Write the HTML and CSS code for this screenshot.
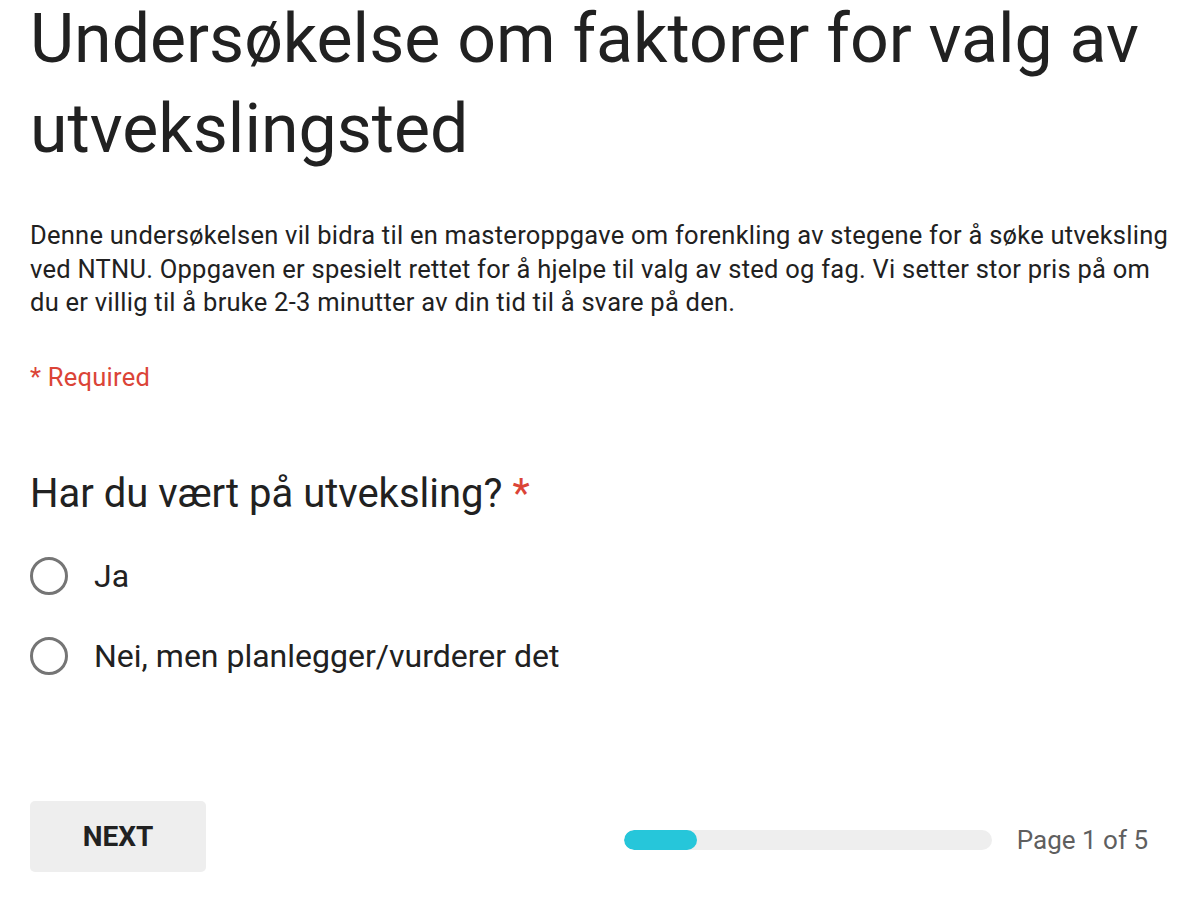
FILE: index.html
```html
<!DOCTYPE html>
<html lang="no">
<head>
<meta charset="utf-8">
<title>Undersøkelse om faktorer for valg av utvekslingsted</title>
<link rel="stylesheet" href="styles.css">
</head>
<body>
<main class="form">
  <h1 class="title">Undersøkelse om faktorer for valg av utvekslingsted</h1>
  <p class="desc">Denne undersøkelsen vil bidra til en masteroppgave om forenkling av stegene for å søke utveksling ved NTNU. Oppgaven er spesielt rettet for å hjelpe til valg av sted og fag. Vi setter stor pris på om du er villig til å bruke 2-3 minutter av din tid til å svare på den.</p>
  <p class="required">* Required</p>
  <section class="question">
    <h2 class="q-title">Har du vært på utveksling? <span class="star">*</span></h2>
    <div class="options">
      <label class="option"><span class="radio"></span><span class="opt-label">Ja</span></label>
      <label class="option"><span class="radio"></span><span class="opt-label">Nei, men planlegger/vurderer det</span></label>
    </div>
  </section>
  <footer class="nav">
    <button class="next" type="button">NEXT</button>
    <div class="progress">
      <div class="track"><div class="fill" style="width:20%"></div></div>
      <span class="page">Page 1 of 5</span>
    </div>
  </footer>
</main>
</body>
</html>
```
FILE: styles.css
```css
html, body {
  margin: 0;
  padding: 0;
  background: #ffffff;
}

body {
  font-family: Roboto, "Liberation Sans", Arial, sans-serif;
  color: #212121;
}

.form {
  width: 1140px;
  padding: 0 30px;
  display: flex;
  flex-direction: column;
}

.title {
  margin: -6px 0 0;
  font-size: 68px;
  line-height: 90px;
  font-weight: 400;
  color: #212121;
}

.desc {
  margin: 45px 0 0;
  font-size: 25.5px;
  line-height: 33.5px;
  letter-spacing: 0.25px;
  color: #212121;
}

.required {
  margin: 41px 0 0;
  font-size: 25.5px;
  line-height: 33.5px;
  letter-spacing: 0.25px;
  color: #db4437;
}

.question {
  margin-top: 74px;
  display: flex;
  flex-direction: column;
}

.q-title {
  margin: 0;
  font-size: 40px;
  line-height: 52px;
  font-weight: 400;
  color: #212121;
}

.star {
  color: #db4437;
}

.options {
  margin-top: 37px;
  display: flex;
  flex-direction: column;
  gap: 42px;
}

.option {
  display: flex;
  align-items: center;
  gap: 26px;
  height: 38px;
}

.radio {
  box-sizing: border-box;
  width: 38px;
  height: 38px;
  border: 3.2px solid #757575;
  border-radius: 50%;
  flex: none;
}

.opt-label {
  font-size: 32px;
  line-height: 38px;
  color: #212121;
}

.nav {
  margin-top: 126px;
  display: flex;
  align-items: center;
  justify-content: space-between;
}

.next {
  width: 176px;
  height: 71px;
  border: none;
  border-radius: 5px;
  background: #eeeeee;
  font-family: Roboto, "Liberation Sans", Arial, sans-serif;
  font-size: 28px;
  font-weight: 700;
  color: #212121;
  padding: 0;
}

.progress {
  display: flex;
  align-items: center;
  gap: 25px;
  margin-top: 6px;
  padding-right: 22px;
}

.track {
  width: 368px;
  height: 20px;
  border-radius: 10px;
  background: #eeeeee;
  overflow: hidden;
}

.fill {
  height: 100%;
  border-radius: 10px;
  background: #26c6da;
}

.page {
  font-size: 26px;
  line-height: 30px;
  color: #5f5f5f;
}
```
